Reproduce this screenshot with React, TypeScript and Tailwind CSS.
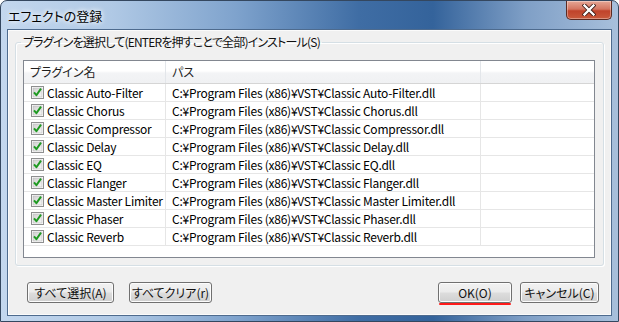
import React from 'react';

const plugins = [
  'Auto-Filter',
  'Chorus',
  'Compressor',
  'Delay',
  'EQ',
  'Flanger',
  'Master Limiter',
  'Phaser',
  'Reverb',
];

const font = "[font-family:'Noto_Sans_CJK_JP','Noto_Sans',sans-serif] [font-feature-settings:'palt']";

const Check = () => (
  <svg width="13" height="13" viewBox="0 0 13 13" className="shrink-0">
    <defs>
      <linearGradient id="cbg" x1="0" y1="0" x2="1" y2="1">
        <stop offset="0" stopColor="#cfcfcf" />
        <stop offset="1" stopColor="#f7f7f7" />
      </linearGradient>
    </defs>
    <rect x="0.5" y="0.5" width="12" height="12" fill="#fff" stroke="#8e8f8f" />
    <rect x="2" y="2" width="9" height="9" fill="url(#cbg)" stroke="#b8b8b8" strokeWidth="0.6" />
    <path d="M3 6.3 L5.4 9.2 L10 2.6" fill="none" stroke="#1f9a22" strokeWidth="2" strokeLinejoin="round" />
  </svg>
);

const Btn = ({ label, w, def }: { label: React.ReactNode; w: string; def?: boolean }) => (
  <button
    className={`relative h-[21px] ${w} rounded-[3px] border border-[#707070] bg-[linear-gradient(#f2f2f2_0%,#ebebeb_48%,#dddddd_52%,#cfcfcf_100%)] text-[12px] leading-none text-[#111] shadow-[inset_0_0_0_1px_#fcfcfc]`}
  >
    {label}
    {def && <span className="absolute left-0 right-0 bottom-[-3px] h-[2px] rounded-full bg-[#ff1a1a]" />}
  </button>
);

export default function App() {
  return (
    <div className={`w-[619px] h-[322px] flex flex-col rounded-t-[7px] border border-[#34475f] bg-[linear-gradient(90deg,#c3d7ee_0%,#b0c9e5_18%,#7fa3cd_38%,#3f6da4_58%,#34639b_70%,#7f9fc6_85%,#a8c0dc_100%)] ${font}`}>
      <div className="h-[28px] flex justify-between shrink-0">
        <div className="pl-[7px] pt-[5px] text-[13px] text-black [text-shadow:0_0_6px_#fff,0_0_4px_#fff]">エフェクトの登録</div>
        <div className="mr-[6px] w-[46px] h-[19px] rounded-b-[5px] border border-t-0 border-[#5b2a22] bg-[linear-gradient(#e6a796_0%,#d47560_45%,#c0432b_55%,#c95a3c_100%)] flex items-center justify-center shadow-[inset_0_0_0_1px_rgba(255,255,255,0.35)]">
          <svg width="14" height="12" viewBox="0 0 14 12">
            <path d="M2.5 1.5 L11.5 10.5 M11.5 1.5 L2.5 10.5" stroke="#3a1a14" strokeWidth="4" strokeLinecap="square" />
            <path d="M2.5 1.5 L11.5 10.5 M11.5 1.5 L2.5 10.5" stroke="#fff" strokeWidth="2.4" strokeLinecap="square" />
          </svg>
        </div>
      </div>
      <div className="mx-[6px] mb-[5px] flex-1 border border-[#4e6b8e] bg-[#f0f0f0] flex flex-col px-[7px] shadow-[inset_0_0_0_1px_#fbfbfb]">
        <fieldset className="mt-[4px] rounded-[3px] border border-[#d5dfe5] shadow-[inset_1px_1px_0_#fff,1px_1px_0_#fff] pl-[7px] pr-[8px] pb-[7px]">
          <legend className="ml-[-2px] px-[2px] text-[12px] leading-[16px] tracking-[-0.8px] text-[#111]">
            プラグインを選択して(ENTERを押すことで全部)インストール(S)
          </legend>
          <div className="mt-[10px] h-[198px] border border-[#828790] bg-white flex flex-col">
            <div className="h-[23px] flex shrink-0 border-b border-[#d5d5d5] bg-[linear-gradient(#ffffff_0%,#ffffff_45%,#f3f4f6_55%,#f0f1f3_100%)] text-[12px] text-[#1e1e1e]">
              <div className="w-[142px] pl-[6px] flex items-center border-r border-[#e3e6ea]">プラグイン名</div>
              <div className="w-[315px] pl-[6px] flex items-center border-r border-[#e3e6ea]">パス</div>
              <div className="flex-1" />
            </div>
            {plugins.map((p) => (
              <div key={p} className="h-[18px] flex shrink-0 border-b border-[#e6e6e6] text-[12px] tracking-[-0.25px] text-black">
                <div className="w-[142px] pl-[7px] gap-[3px] flex items-center border-r border-[#e6e6e6] whitespace-nowrap">
                  <Check />
                  <span>Classic {p}</span>
                </div>
                <div className="w-[315px] pl-[6px] flex items-center border-r border-[#e6e6e6] whitespace-nowrap">
                  C:¥Program Files (x86)¥VST¥Classic {p}.dll
                </div>
                <div className="flex-1" />
              </div>
            ))}
          </div>
        </fieldset>
        <div className="mt-[16px] flex items-center pl-[12px] pr-[5px]">
          <Btn label="すべて選択(A)" w="w-[87px]" />
          <div className="w-[15px]" />
          <Btn label="すべてクリア(r)" w="w-[83px]" />
          <div className="flex-1" />
          <Btn label="OK(O)" w="w-[74px]" def />
          <div className="w-[8px]" />
          <Btn label="キャンセル(C)" w="w-[79px]" />
        </div>
      </div>
    </div>
  );
}
